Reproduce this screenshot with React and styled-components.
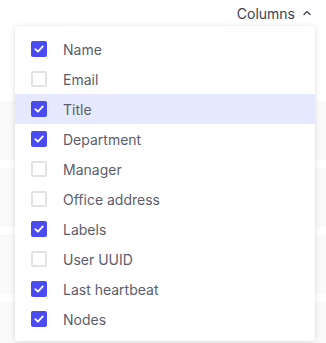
import React from 'react';
import styled, { createGlobalStyle } from 'styled-components';

const GlobalStyle = createGlobalStyle`
  html, body {
    margin: 0;
    padding: 0;
    background: #ffffff;
    font-family: Inter, "Noto Sans", sans-serif;
  }
`;

const Page = styled.div`
  position: relative;
  width: 326px;
  height: 343px;
  overflow: hidden;
  background: #fff;
`;

// top bar holding the Columns toggle
const Toolbar = styled.div`
  display: flex;
  justify-content: flex-end;
  align-items: center;
  height: 26px;
  padding-right: 15px;
`;

const ColumnsToggle = styled.button`
  display: flex;
  align-items: center;
  gap: 8px;
  border: none;
  background: none;
  padding: 0;
  font-family: inherit;
  font-size: 14px;
  color: #3a4052;
  cursor: pointer;
`;

// faint table rows behind the dropdown
const TableBody = styled.div`
  display: flex;
  flex-direction: column;
  gap: 8px;
  padding-top: 75px;
`;

const TableRow = styled.div`
  height: 59px;
  background: #fafafa;
`;

// floating dropdown menu
const Menu = styled.div`
  position: absolute;
  top: 26px;
  left: 15px;
  width: 300px;
  padding: 8px 0 7px;
  background: #fff;
  border-radius: 2px;
  box-shadow: 0 1px 6px rgba(0, 0, 0, 0.12), 0 0 2px rgba(0, 0, 0, 0.06);
`;

const Item = styled.label`
  display: flex;
  align-items: center;
  gap: 16px;
  height: 30px;
  padding-left: 16px;
  background: ${p => (p.$active ? '#e6e9fd' : 'transparent')};
  font-size: 14px;
  color: #5b5d6b;
  cursor: pointer;
`;

const Box = styled.span`
  display: flex;
  align-items: center;
  justify-content: center;
  box-sizing: border-box;
  width: 16px;
  height: 16px;
  border-radius: 2px;
  background: ${p => (p.$checked ? '#4b4bf4' : '#fff')};
  border: ${p => (p.$checked ? 'none' : '2px solid #e3e3e7')};
`;

const Check = () => (
  <svg width="12" height="12" viewBox="0 0 12 12" fill="none">
    <path d="M2.3 6.2 L4.9 8.7 L9.8 3.4" stroke="#fff" strokeWidth="1.8" strokeLinecap="round" strokeLinejoin="round" />
  </svg>
);

const Chevron = () => (
  <svg width="8" height="6" viewBox="0 0 8 6" fill="none">
    <path d="M1 4.5 L4 1.5 L7 4.5" stroke="#3a4052" strokeWidth="1.3" strokeLinecap="round" strokeLinejoin="round" />
  </svg>
);

const columns = [
  { name: 'Name', checked: true },
  { name: 'Email', checked: false },
  { name: 'Title', checked: true, active: true },
  { name: 'Department', checked: true },
  { name: 'Manager', checked: false },
  { name: 'Office address', checked: false },
  { name: 'Labels', checked: true },
  { name: 'User UUID', checked: false },
  { name: 'Last heartbeat', checked: true },
  { name: 'Nodes', checked: true },
];

export default function App() {
  return (
    <Page>
      <GlobalStyle />
      <Toolbar>
        <ColumnsToggle>
          Columns
          <Chevron />
        </ColumnsToggle>
      </Toolbar>
      <TableBody>
        <TableRow />
        <TableRow />
        <TableRow />
        <TableRow />
      </TableBody>
      <Menu>
        {columns.map(c => (
          <Item key={c.name} $active={c.active}>
            <Box $checked={c.checked}>{c.checked && <Check />}</Box>
            {c.name}
          </Item>
        ))}
      </Menu>
    </Page>
  );
}
